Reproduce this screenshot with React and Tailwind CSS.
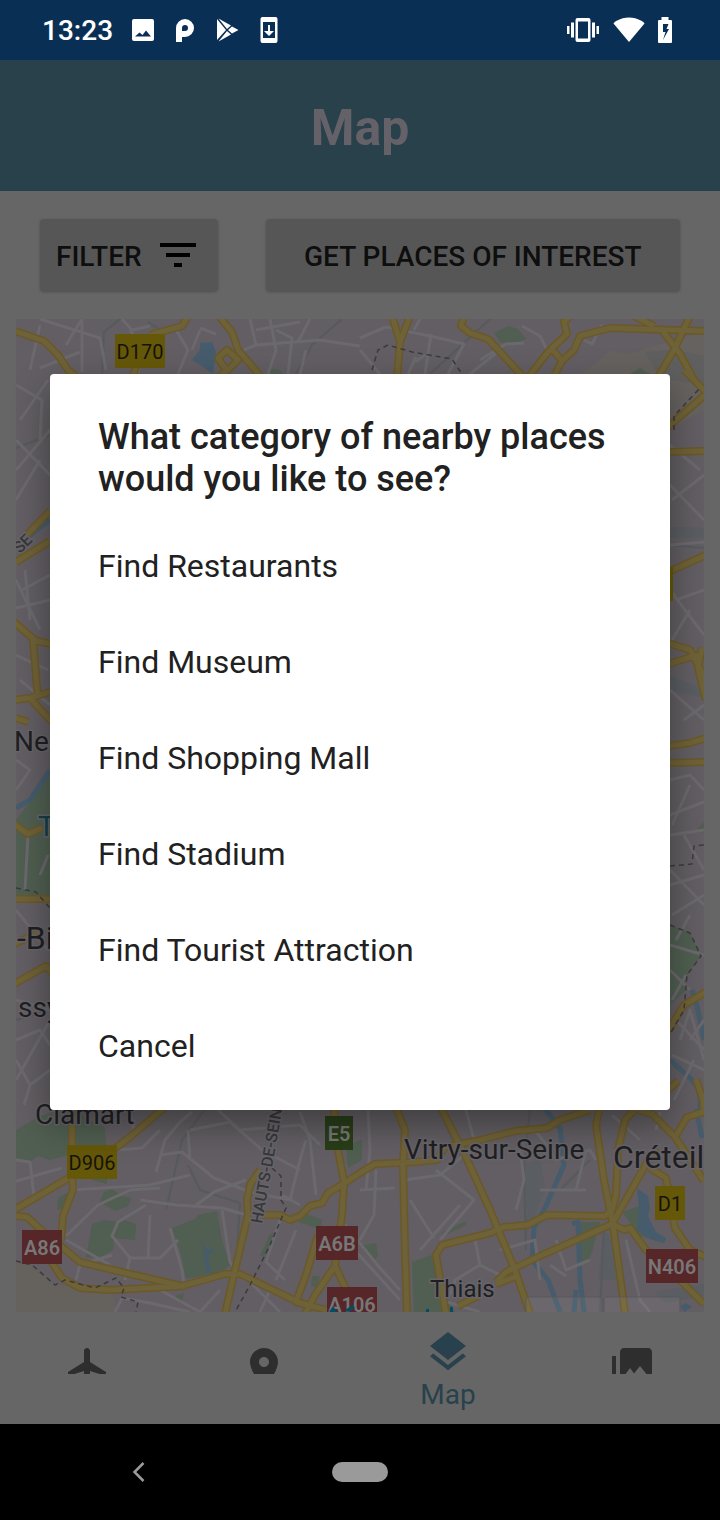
import React from "react";

const parks = [
  "M16 1130 L40 1116 L66 1108 L105 1128 L106 1150 L90 1150 L66 1156 L50 1160 L38 1156 L30 1162 L16 1158Z",
  "M58 1198 L68 1192 L66 1208 L57 1210Z",
  "M92 1160 L107 1165 L107 1184 L92 1180Z",
  "M104 1192 L112 1189 L122 1196 L132 1198 L128 1206 L115 1211 L100 1202Z",
  "M92 1224 L104 1220 L118 1222 L124 1220 L136 1224 L135 1240 L114 1238 L113 1250 L100 1258 L86 1257Z",
  "M172 1228 L195 1219 L198 1215 L217 1211 L222 1240 L230 1265 L222 1272 L186 1279 L181 1255Z",
  "M296 1216 L304 1213 L322 1220 L320 1229 L298 1222Z",
  "M270 1234 L276 1232 L266 1255 L260 1256Z",
  "M346 1146 L362 1140 L362 1160 L348 1168Z",
  "M412 1262 L432 1255 L437 1278 L455 1312 L414 1312Z",
  "M580 1222 L600 1222 L592 1252 L586 1265 L580 1262Z",
  "M622 1212 L640 1206 L642 1220 L636 1226 L666 1238 L664 1243 L640 1236Z",
  "M442 1232 L466 1221 L466 1225 L444 1236Z",
  "M360 1246 L376 1243 L378 1256 L374 1262Z",
  "M312 1276 L320 1276 L317 1288 L311 1286Z",
  "M175 1296 L184 1293 L182 1302 L177 1300Z",
  "M494 333 L508 326 L518 329 L526 339 L512 345 L500 342Z",
  "M630 374 L640 368 L650 374Z",
  "M270 369 L280 370 L284 376 L270 376Z",
  "M16 820 L50 775 L50 898 L16 896Z",
  "M670 925 L690 933 L701 956 L687 975 L686 990 L670 1005Z",
  "M697 829 L704 822 L704 832Z",
];

const waterAreas = [
  "M192 360 L200 350 L200 343 L212 342 L216 352 L213 374 L202 366Z",
  "M637 1188 L648 1196 L650 1208 L648 1216 L656 1232 L666 1238 L664 1243 L648 1238 L637 1230 L639 1208Z",
  "M201 1239 L206 1250 L215 1249 L208 1256 L211 1273 L206 1273 L204 1252Z",
  "M680 1306 L686 1303 L692 1307 L684 1312Z",
];

const rivers = [
  "M538 1100 L560 1128 L564 1165 L545 1208 L534 1228 L532 1260 L548 1280 L560 1312",
  "M572 1224 L578 1222 L580 1280 L584 1312",
  "M576 1290 L574 1312",
  "M16 808 L30 800 L50 770",
  "M16 550 L34 532 L50 520",
  "M670 1060 L690 1078 L700 1090 L700 1109",
  "M692 990 L698 1010 L704 1040",
  "M696 1109 L702 1138",
];

const mainRoads = [
  "M16 1209 L67 1179 L95 1160 L117 1147 L130 1137 L165 1107",
  "M72 1100 L72 1175 L73 1190 L63 1216 L61 1240",
  "M16 1216 L27 1217 L40 1229 L80 1262 L130 1274 L182 1286 L225 1274 L240 1274 L300 1303 L334 1312",
  "M45 1252 L62 1278 L80 1288 L110 1290 L150 1288 L185 1286",
  "M225 1314 L235 1270 L248 1215 L247 1200 L250 1185 L260 1170",
  "M262 1215 L280 1215 L290 1220 L300 1216 L310 1206 L322 1203 L328 1193 L340 1186 L360 1173 L375 1164 L415 1162 L437 1160 L445 1147 L480 1140 L515 1131 L547 1128 L560 1120 L590 1110",
  "M333 1100 L338 1150 L344 1182 L342 1215 L335 1266 L315 1295 L305 1314",
  "M318 1235 L306 1275 L296 1302 L312 1306",
  "M335 1266 L345 1287 L352 1296",
  "M395 1105 L405 1130 L403 1165 L405 1250 L407 1314",
  "M440 1106 L465 1155 L490 1210 L515 1270 L530 1314",
  "M446 1314 L436 1255 L442 1245 L490 1233 L504 1227 L527 1225 L547 1215 L605 1216 L612 1210 L616 1195 L618 1150 L625 1120 L638 1106",
  "M600 1106 L596 1125 L604 1180 L613 1225 L622 1290 L625 1314",
  "M458 1306 L478 1296 M496 1282 L506 1272 L540 1256 L612 1224 L645 1166 L656 1148",
  "M496 1284 L518 1276",
  "M612 1224 L624 1230 L630 1228 L646 1250 L662 1262 L704 1304",
  "M638 1110 L652 1114 L675 1137 L687 1117 L704 1112 M675 1137 L704 1181",
  "M650 1168 L666 1178 L670 1200 L675 1228 L690 1250 L706 1257",
  "M12 330 L44 341 L58 355 L68 370 L80 380",
  "M132 380 L138 360 M150 335 L182 326 L188 316",
  "M218 315 L232 332 L238 350 L262 378",
  "M218 358 L227 350 L238 360 L227 371Z M226 371 L215 380",
  "M392 316 L400 342 L397 378 M410 316 L400 342",
  "M464 316 L461 326 L470 333 L488 339 L502 354 L524 378",
  "M570 316 L564 322 L567 334 L548 352 L526 380 M552 349 L562 361 L574 350 L580 336 L610 328 L704 331",
  "M562 361 L553 378",
  "M634 316 L654 326 M662 330 L680 354 L694 380 M690 316 L674 350 L655 382",
  "M16 562 L50 541 M16 546 L50 511",
  "M14 622 L36 641 L52 644 M33 640 L38 698 M14 700 L30 698 L52 722 M30 698 L50 692 M16 718 L28 722",
  "M14 824 L28 834 L42 828 M14 899 L52 899",
  "M14 944 L40 932 M14 984 L46 966 L54 975",
  "M668 427 L706 394 M684 370 L706 392 M668 452 L706 451",
  "M668 572 L706 555 M668 643 L690 650 L706 680 M668 664 L698 655 M702 648 L698 668 L706 700",
  "M668 746 L690 743 L706 738 M668 763 L706 762",
  "M668 1031 L684 1005 L706 992 M668 1090 L678 1081 M696 1079 L703 1100 L704 1112",
];

const minorRoads = [
  "M40 319 L100 338 L106 370 M30 370 L40 325 M66 345 L82 319 M82 319 L82 372 M40 368 L80 352",
  "M122 319 L132 330 L150 326 M178 374 L188 350 L176 330 M200 330 L192 350 M200 328 L216 334",
  "M250 319 L256 345 L244 350 M256 330 L300 322 M256 345 L320 340 L360 346 M288 374 L292 338 L276 330 M300 374 L306 350",
  "M360 338 L386 327 L430 336 L464 344 L448 374 M420 319 L414 330 M431 334 L425 374",
  "M360 350 L380 374 M416 357 L408 374 M425 355 L415 362 M480 360 L506 344 L524 343 M522 326 L540 336 L548 352 M584 340 L592 344 L602 325",
  "M470 374 L500 350 M310 319 L298 342 M270 319 L276 350 L268 374 M130 330 L142 350 L138 374",
  "M16 1160 L30 1162 L34 1196 M16 1181 L62 1168 M70 1190 L150 1185 L190 1175 M66 1236 L98 1205 L130 1190 L160 1188",
  "M140 1200 L176 1205 L222 1208 L250 1216 M146 1205 L118 1222 L112 1236 L130 1258 L125 1280 M156 1172 L165 1140 L180 1122 L192 1112",
  "M130 1112 L134 1130 L118 1148 M117 1150 L142 1148 L160 1130 M160 1155 L182 1152 L214 1178 L250 1192 L290 1200",
  "M170 1228 L182 1270 L184 1286 M222 1210 L230 1262 L244 1280 M130 1258 L160 1258 L178 1240 M148 1258 L150 1215",
  "M190 1130 L230 1122 L262 1150 L300 1170 M188 1130 L190 1160 M196 1205 L214 1192 L246 1180 M218 1110 L240 1130 L300 1125 L320 1145",
  "M300 1112 L310 1140 L316 1195 M290 1200 L300 1160 L306 1140 M282 1195 L300 1205 M280 1220 L266 1262 L285 1280 M296 1230 L276 1280",
  "M110 1265 L66 1240 M76 1280 L80 1265 L112 1255 M115 1312 L122 1298 L150 1303 L190 1312 M160 1290 L200 1312 M200 1312 L220 1290",
  "M250 1282 L280 1312 M270 1290 L260 1312 M345 1225 L380 1268 L400 1290 M350 1245 L400 1300 M360 1190 L395 1188",
  "M368 1110 L370 1150 L366 1190 M376 1170 L374 1215 L360 1240 M404 1180 L440 1175 L470 1150 M410 1200 L434 1238 M436 1170 L474 1200 L440 1240",
  "M420 1250 L460 1205 M475 1240 L480 1265 L500 1275 M480 1265 L455 1280 L450 1295 M466 1110 L474 1140 M520 1150 L524 1180 L516 1210",
  "M540 1190 L586 1190 M555 1160 L590 1150 L596 1160 M556 1240 L566 1270 L590 1260 M550 1265 L566 1276 M626 1240 L640 1300 L650 1312",
  "M586 1150 L576 1190 M612 1115 L640 1140 M660 1112 L656 1130 M535 1130 L550 1150 M540 1280 L535 1240 L500 1250 M440 1300 L480 1312",
  "M16 385 L42 400 L40 440 M16 440 L50 475 M20 420 L48 380 M16 470 L50 430 M16 500 L40 460 M22 590 L50 575 M16 608 L50 600",
  "M16 580 L40 630 M25 570 L30 620 M16 655 L48 670 M20 680 L50 705 M16 760 L30 770 L16 790 M28 835 L25 890 M40 875 L48 855",
  "M16 910 L48 950 M16 1000 L50 1010 M16 1040 L40 1030 L50 1045 M16 1060 L30 1085 L24 1105 M30 1085 L50 1070 M16 1080 L50 1020",
  "M670 445 L700 470 M672 500 L704 475 M670 485 L704 520 M670 545 L704 542 M670 590 L704 635 M676 600 L704 590 M672 640 L690 610",
  "M670 690 L704 720 M684 720 L704 705 M670 780 L690 775 L704 790 M672 825 L690 785 M670 815 L704 802 M684 835 L704 870 M670 835 L704 830",
  "M670 870 L704 905 M670 885 L704 875 M672 915 L704 895 M670 945 L704 955 M676 940 L690 915 M672 1000 L686 975 M680 1040 L690 1010 L704 1060",
  "M672 1055 L704 1070 M676 1020 L704 1050 M674 1100 L694 1060 M690 1040 L704 1020 M670 970 L690 990",
];

const rails = [
  "M102 374 L104 332 L120 319 M148 322 L164 332 M296 374 L312 345 L342 319 M430 374 L490 319",
  "M205 1109 L182 1140 L166 1210 M188 1165 L200 1190 L240 1203 M240 1203 L236 1270 M440 1109 L452 1140",
  "M530 1109 L524 1170 L526 1250 M560 1190 L590 1160 M604 1225 L600 1312 M16 448 L50 435 M16 1020 L50 1010 M670 545 L704 548",
];

const borders = [
  "M372 370 L378 350 L388 345 L412 352 L452 359 L462 374",
  "M16 1261 L32 1265 L55 1285 L65 1280 L95 1288 L116 1278 L124 1288 L121 1297 L138 1302 L136 1312",
  "M272 1168 L281 1176 L281 1200 L286 1208 L270 1245 L250 1285 L235 1312",
  "M674 430 L674 416 L700 388",
  "M670 866 L692 864 L694 846 L704 845",
  "M670 925 L690 933 L701 956 L687 975 L684 1010 L670 1034",
  "M16 888 L36 892 L50 908",
];

function Paths({ list, ...props }) {
  return (
    <g fill="none" strokeLinejoin="round" {...props}>
      {list.map((d) => (
        <path key={d} d={d} />
      ))}
    </g>
  );
}

function Shield({ x, y, w, fill, color, weight = 400, children }) {
  return (
    <g>
      <rect x={x} y={y} width={w} height="34" fill={fill} />
      <text x={x + w / 2} y={y + 25} fontSize="20" fontWeight={weight} fill={color} textAnchor="middle">
        {children}
      </text>
    </g>
  );
}

function CityMap() {
  return (
    <svg
      className="block h-full w-full font-[Roboto,sans-serif]"
      viewBox="16 319 688 993"
      preserveAspectRatio="xMidYMin slice"
      role="img"
      aria-label="Map"
    >
      <rect x="16" y="319" width="688" height="993" fill="#625e63" />
      <path d="M16 1262 L32 1266 L55 1285 L112 1290 L116 1312 L16 1312Z" fill="#65625d" />
      <path d="M580 374 L600 360 L610 350 L628 354 L650 347 L704 332 L704 410 L670 430 L580 380Z" fill="#65625f" />
      <path d="M645 352 L676 350 L704 356 L704 385 L660 378Z" fill="#5f5f5f" />
      <path d="M670 527 L704 528 L704 538 L670 538Z M670 675 L704 690 L704 698 L670 690Z M524 1165 L540 1160 L545 1190 L524 1240Z M604 1230 L612 1240 L618 1280 L598 1280Z M655 1292 L704 1284 L704 1296 L665 1303Z" fill="#5a5d61" />
      <g fill="#505f51">
        {parks.map((d) => (
          <path key={d} d={d} />
        ))}
      </g>
      <g fill="#465c6c">
        {waterAreas.map((d) => (
          <path key={d} d={d} />
        ))}
      </g>
      <Paths list={rivers} stroke="#465c6c" strokeWidth="5" />
      <Paths list={rails} stroke="#575a5c" strokeWidth="2" />
      <Paths list={minorRoads} stroke="#6b696d" strokeWidth="3" />
      <Paths list={mainRoads} stroke="#6c5827" strokeWidth="8" />
      <Paths list={mainRoads} stroke="#6e6238" strokeWidth="5" />
      <Paths list={borders} stroke="#3b3a3d" strokeWidth="1.5" strokeDasharray="5 4" />

      <Shield x={115} y={334} w={50} fill="#665809" color="#16140a">D170</Shield>
      <Shield x={67} y={1145} w={50} fill="#665809" color="#16140a">D906</Shield>
      <Shield x={655} y={1186} w={30} fill="#665809" color="#16140a">D1</Shield>
      <rect x="660" y="567" width="13" height="34" fill="#665809" />
      <Shield x={325} y={1116} w={28} fill="#293d18" color="#777777" weight={600}>E5</Shield>
      <Shield x={22} y={1230} w={40} fill="#572629" color="#777777" weight={600}>A86</Shield>
      <Shield x={316} y={1226} w={42} fill="#572629" color="#777777" weight={600}>A6B</Shield>
      <Shield x={646} y={1249} w={52} fill="#572629" color="#777777" weight={600}>N406</Shield>
      <Shield x={327} y={1287} w={50} fill="#572629" color="#777777" weight={600}>A106</Shield>
      <path d="M329 1312 L333 1306 L337 1312Z M345 1310 L353 1305 L355 1308 L348 1312Z" fill="#064b63" />
      <path d="M426 1309h3v3h-3z M450 1307h3v5h-3z" fill="#064b63" />

      <g fill="#1f1f22" stroke="#67646a" strokeWidth="3" paintOrder="stroke">
        <text x="35" y="1124" fontSize="28">Clamart</text>
        <text x="404" y="1159" fontSize="28">Vitry-sur-Seine</text>
        <text x="613" y="1168" fontSize="32">Créteil</text>
        <text x="430" y="1297" fontSize="24">Thiais</text>
        <text x="14" y="751" fontSize="28">Ne</text>
        <text x="17" y="949" fontSize="32">-Bi</text>
        <text x="18" y="1017" fontSize="28">ssy</text>
        <text x="38" y="836" fontSize="28" fill="#123f46">T</text>
      </g>
      <g fill="#38373a" stroke="#67646a" strokeWidth="3" paintOrder="stroke" fontSize="16" fontWeight="500">
        <text x="262" y="1224" transform="rotate(-80 262 1224)">HAUTS-DE-SEINE</text>
        <text x="20" y="554" transform="rotate(-45 20 554)">SE</text>
      </g>

      <rect x="526" y="1297" width="76" height="20" rx="2" fill="#ffffff" fillOpacity="0.06" stroke="#58585a" />
      <rect x="604" y="1297" width="76" height="20" rx="2" fill="#ffffff" fillOpacity="0.06" stroke="#58585a" />
    </svg>
  );
}

function StatusBar() {
  return (
    <div className="flex h-15 items-center justify-between bg-[#0a2f54] pr-12 pl-[42px] text-white">
      <div className="flex items-center gap-[18px]">
        <span className="pt-[2px] text-[28px] leading-8 font-medium">13:23</span>
        <svg className="size-6" viewBox="0 0 24 24" fill="currentColor" aria-hidden="true">
          <path fillRule="evenodd" d="M3 1h18a2 2 0 0 1 2 2v18a2 2 0 0 1-2 2H3a2 2 0 0 1-2-2V3a2 2 0 0 1 2-2Zm1 17.500h16l-5-6-3.500 4.500-3-2.500Z" />
        </svg>
        <svg className="size-6" viewBox="0 0 24 24" fill="currentColor" aria-hidden="true">
          <path d="M3 24V10a9 9 0 1 1 9 9H9v5Z" />
          <circle cx="12" cy="10" r="3" fill="#0a2f54" />
          <path d="M9 10v3h3Z" fill="#0a2f54" />
        </svg>
        <svg className="size-6" viewBox="0 0 24 24" fill="currentColor" aria-hidden="true">
          <path d="M2 1 11 12 2 22ZM3.500 0.500 16 7.500 12 11ZM3.500 23.500 16 16.500 12 13ZM17 8.500 23.500 12 17 15.500 13 12Z" />
        </svg>
        <svg className="h-[26px] w-6" viewBox="0 0 24 26" fill="currentColor" aria-hidden="true">
          <path fillRule="evenodd" d="M5.500 0h13a2 2 0 0 1 2 2v22a2 2 0 0 1-2 2h-13a2 2 0 0 1-2-2V2a2 2 0 0 1 2-2ZM6 5v16h12V5Z" />
          <path d="M11 8h2v6h4l-5 5-5-5h4Z" />
        </svg>
      </div>
      <div className="flex items-center gap-[13px]">
        <svg className="h-6 w-[34px]" viewBox="0 0 34 24" fill="currentColor" aria-hidden="true">
          <path fillRule="evenodd" d="M11.500 0h11a2 2 0 0 1 2 2v20a2 2 0 0 1-2 2h-11a2 2 0 0 1-2-2V2a2 2 0 0 1 2-2ZM12 3.500v17h10v-17Z" />
          <path d="M1 8h2.500v8H1ZM5 4.500h3v15H5ZM26 4.500h3v15h-3ZM30.500 8H33v8h-2.500Z" />
        </svg>
        <svg className="h-[26px] w-8" viewBox="0 0 32 26" fill="currentColor" aria-hidden="true">
          <path d="M16 25 .5 6.500C.3 5.500 7 .5 16 .5s15.700 5 15.500 6Z" />
        </svg>
        <svg className="h-[26px] w-[14px]" viewBox="0 0 14 26" fill="currentColor" aria-hidden="true">
          <path fillRule="evenodd" d="M3.500 0h7v3H13a1 1 0 0 1 1 1v21a1 1 0 0 1-1 1H1a1 1 0 0 1-1-1V4a1 1 0 0 1 1-1h2.500ZM5 7v8h2.500L5 23l6-11H8.500L10.500 7Z" />
        </svg>
      </div>
    </div>
  );
}

const tabs = [
  {
    name: "Flights",
    d: "M21 16v-2l-8-5V3.5c0-.83-.67-1.5-1.5-1.5S10 2.67 10 3.5V9l-8 5v2l8-2.500V19l-2 1.500V22l3.500-1 3.500 1v-1.500L13 19v-5.500l8 2.500z",
  },
  {
    name: "Places",
    d: "M12 2C8.130 2 5 5.130 5 9c0 5.250 7 13 7 13s7-7.750 7-13c0-3.870-3.130-7-7-7zm0 9.500c-1.380 0-2.500-1.120-2.500-2.500s1.120-2.500 2.500-2.500 2.500 1.120 2.500 2.500-1.120 2.500-2.500 2.500z",
  },
  {
    name: "Map",
    active: true,
    d: "M11.990 18.540l-7.370-5.730L3 14.070l9 7 9-7-1.630-1.270-7.380 5.740zM12 16l7.360-5.730L21 9l-9-7-9 7 1.630 1.270L12 16z",
  },
  {
    name: "Gallery",
    d: "M22 16V4c0-1.100-.9-2-2-2H8c-1.100 0-2 .9-2 2v12c0 1.100.9 2 2 2h12c1.100 0 2-.9 2-2zm-11-4l2.030 2.710L16 11l4 5H8l3-4zM2 6v14c0 1.100.9 2 2 2h14v-2H4V6H2z",
  },
];

function TabBar() {
  return (
    <nav className="flex h-28 bg-[#666666]">
      {tabs.map((tab) =>
        tab.active ? (
          <button key={tab.name} type="button" className="flex w-48 flex-col items-center gap-[3px] pt-4 text-[#28414c]">
            <svg className="size-12" viewBox="0 0 24 24" fill="currentColor" aria-hidden="true">
              <path d={tab.d} />
            </svg>
            <span className="text-[28px] leading-8">{tab.name}</span>
          </button>
        ) : (
          <button key={tab.name} type="button" aria-label={tab.name} className="flex flex-1 flex-col items-center pt-8 text-[#2e2e2e]">
            <svg className="h-[30px] w-12" viewBox="0 0 24 15" fill="currentColor" aria-hidden="true">
              <path d={tab.d} />
            </svg>
          </button>
        )
      )}
    </nav>
  );
}

const choices = [
  "Find Restaurants",
  "Find Museum",
  "Find Shopping Mall",
  "Find Stadium",
  "Find Tourist Attraction",
  "Cancel",
];

function CategoryDialog() {
  return (
    <div className="absolute inset-0 flex items-center justify-center px-[50px]">
      <div
        role="dialog"
        aria-labelledby="dialog-title"
        className="w-full rounded-[4px] bg-white pt-[42px] pb-4 text-[#212121] shadow-[0_14px_36px_rgba(0,0,0,0.36)]"
      >
        <h2 id="dialog-title" className="mb-[18px] px-12 text-[36px] leading-[42px] font-medium">
          What category of nearby places would you like to see?
        </h2>
        <ul>
          {choices.map((choice) => (
            <li key={choice}>
              <button type="button" className="h-24 w-full px-12 text-left text-[32px]">
                {choice}
              </button>
            </li>
          ))}
        </ul>
      </div>
    </div>
  );
}

export default function App() {
  return (
    <div className="flex min-h-screen flex-col bg-black font-[Roboto,sans-serif]">
      <StatusBar />
      <div className="relative flex flex-1 flex-col bg-[#666666]">
        <header className="flex h-[131px] items-center justify-center bg-[#28414b]">
          <h1 className="pt-1 text-[50px] leading-[60px] font-bold text-[#656168]">Map</h1>
        </header>
        <div className="flex gap-12 px-10 py-7 text-[28px] font-medium text-[#0e0e0e]">
          <button type="button" className="flex h-18 items-center gap-3 rounded-[4px] bg-[#565656] px-4 shadow-[0_1px_3px_rgba(0,0,0,0.25)]">
            <span className="pt-[3px]">FILTER</span>
            <svg className="size-12" viewBox="0 0 48 48" fill="#000000" aria-hidden="true">
              <path d="M6 12h36v4H6ZM12 22h24v4H12ZM20 32h8v4h-8Z" />
            </svg>
          </button>
          <button type="button" className="h-18 flex-1 rounded-[4px] bg-[#565656] pt-[3px] shadow-[0_1px_3px_rgba(0,0,0,0.25)]">
            GET PLACES OF INTEREST
          </button>
        </div>
        <div className="mx-4 h-0 min-h-[640px] flex-1 overflow-hidden">
          <CityMap />
        </div>
        <TabBar />
        <CategoryDialog />
      </div>
      <div className="grid h-24 grid-cols-[1fr_auto_1fr] items-center">
        <button type="button" aria-label="Back" className="justify-self-start pl-32 text-[#9a9a9a]">
          <svg className="size-5" viewBox="0 0 20 20" fill="none" stroke="currentColor" strokeWidth="2.500" aria-hidden="true">
            <path d="M15.500 1 6.500 10l9 9" />
          </svg>
        </button>
        <button type="button" aria-label="Home" className="h-5 w-14 rounded-full bg-[#9a9a9a]" />
      </div>
    </div>
  );
}
